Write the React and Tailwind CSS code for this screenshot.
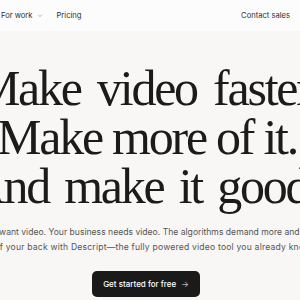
import React from "react";

const Chevron = () => (
  <svg width="6" height="6" viewBox="0 0 10 10" fill="none" className="ml-[4px] mt-[1px]">
    <path d="M2.5 3.5l2.5 2.5 2.5-2.5" stroke="#888" strokeWidth="1.1" strokeLinecap="round" strokeLinejoin="round" />
  </svg>
);

const App = () => {
  return (
    <div className="w-[300px] h-[300px] overflow-hidden bg-[#f8f7f5] font-['Inter',sans-serif]">
      <header className="h-[31px] bg-[#fcfcfc] flex items-center pl-[1px] pr-[10px] text-[7.6px] text-[#2e2e2e]">
        <div className="flex items-center">
          <span>For work</span>
          <Chevron />
        </div>
        <span className="ml-[14px]">Pricing</span>
        <span className="ml-auto">Contact sales</span>
      </header>
      <main className="flex flex-col items-center pr-[6px]">
        <h1 className="mt-[33px] flex flex-col items-center font-['Liberation_Serif',serif] text-[50px] leading-[49px] tracking-[-0.045em] text-[#1b1b1b] font-normal">
          <span className="whitespace-nowrap [word-spacing:6px]">Make video faster.</span>
          <span className="whitespace-nowrap">Make more of it.</span>
          <span className="whitespace-nowrap [word-spacing:5px] mr-[6px]">And make it good.</span>
        </h1>
        <div className="mt-[14px] flex flex-col items-center text-[8.6px] leading-[15px] text-[#555]">
          <p className="whitespace-nowrap">
            People want video. Your business needs video. The algorithms demand more and more.
          </p>
          <p className="whitespace-nowrap tracking-[0.2px] ml-[7px]">
            Take it all off your back with Descript—the fully powered video tool you already know and love.
          </p>
        </div>
        <button className="mt-[16px] mr-[2px] w-[108px] h-[26px] rounded-[5px] bg-[#1a1a1a] text-white text-[8px] font-medium flex items-center justify-center gap-[5px]">
          <span>Get started for free</span>
          <span className="text-[#bbb]">→</span>
        </button>
      </main>
    </div>
  );
};

export default App;
